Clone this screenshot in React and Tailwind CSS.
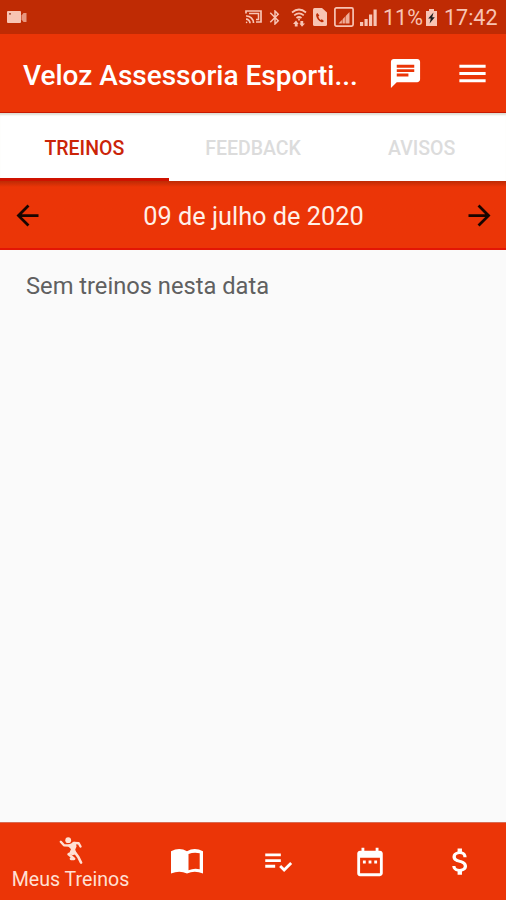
import {
  MdArrowBack,
  MdArrowForward,
  MdAttachMoney,
  MdBluetooth,
  MdChat,
  MdDateRange,
  MdMenu,
  MdPlaylistAddCheck,
} from 'react-icons/md'

const TABS = [
  { id: 'treinos', label: 'TREINOS' },
  { id: 'feedback', label: 'FEEDBACK' },
  { id: 'avisos', label: 'AVISOS' },
]

function CameraIcon() {
  return (
    <svg width="20" height="12" viewBox="0 0 20 12" fill="currentColor">
      <path d="M1 0h12q1 0 1 1v10q0 1-1 1H1q-1 0-1-1V1q0-1 1-1z" />
      <path d="M14.5 4.5l2-2.5h3v9h-3l-2-2.5z" opacity="0.7" />
      <circle cx="3" cy="2.8" r="0.9" fill="#8f2a10" />
    </svg>
  )
}

function CastIcon() {
  return (
    <svg width="17" height="14" viewBox="0 0 17 14" fill="none" stroke="currentColor" strokeWidth="1.7">
      <path d="M1 3.5V1h15v11h-5" />
      <path d="M4 3.5h9.500v6H11" strokeWidth="1.500" />
      <path d="M1 6a7 7 0 0 1 7.5 7M1 9.2a4 4 0 0 1 4 4" />
      <circle cx="1.6" cy="12.4" r="0.8" fill="currentColor" stroke="none" />
    </svg>
  )
}

function WifiIcon() {
  return (
    <svg width="16" height="19" viewBox="0 0 16 19" fill="none" stroke="currentColor" strokeWidth="1.7">
      <path d="M1 4.5q7-6 14 0M3.2 7.3q4.8-4 9.6 0M5.5 10q2.5-2 5 0" />
      <path d="M8 10.5v2" />
      <path
        d="M5 12.500L2 16h1.800v2.500h2.800V16h1zM11 18.800l3-3.300h-1.800V13H9.400v2.500h-1z"
        fill="currentColor"
        stroke="none"
      />
    </svg>
  )
}

function SimCallIcon() {
  return (
    <svg width="14" height="18" viewBox="0 0 14 18" fill="currentColor">
      <path d="M1.5 0H9l5 4.5v12q0 1.5-1.5 1.5h-11Q0 18 0 16.5v-15Q0 0 1.5 0z" />
      <path
        d="M4.3 5q-1.300.7-1.200 2.300.4 4.500 5.500 7 1.500.2 2.300-1.200l-2-1.900-1.400.8Q5.800 10.700 5.300 8.600l1.100-1z"
        fill="#bf2b04"
      />
    </svg>
  )
}

function BoxedSignalIcon() {
  return (
    <svg width="20" height="20" viewBox="0 0 20 20" fill="none" stroke="currentColor">
      <rect x="0.9" y="0.9" width="18.2" height="18.2" rx="1.5" strokeWidth="1.7" />
      <path d="M4.500 16.500L15.500 5v11.500z" fill="currentColor" stroke="none" opacity="0.85" />
      <path d="M8.300 12v5M11.300 9v8" stroke="#bf2b04" strokeWidth="0.600" />
    </svg>
  )
}

function SignalIcon() {
  return (
    <svg width="17" height="18" viewBox="0 0 17 18" fill="none" stroke="currentColor" strokeWidth="3.2">
      <path d="M1.6 18v-4M6.1 18v-7M10.6 18V6.500M15.100 18V1.500" />
    </svg>
  )
}

function BatteryIcon() {
  return (
    <svg width="11" height="17" viewBox="0 0 11 17" fill="currentColor">
      <path d="M3 0h5v2h3v15H0V2h3z" />
      <path d="M7.5 3.5L2.2 9.5h2.6L3.6 14.5l5.200-6.200H6.200z" fill="#1c1c1c" />
    </svg>
  )
}

function BookIcon() {
  return (
    <svg width="32" height="25" viewBox="0 0 32 25" fill="currentColor">
      <path
        fillRule="evenodd"
        d="M0 2.200Q8.500-2 16 2.200 23.500-2 32 2.200V24.500Q23.500 20.800 16 24.500 8.500 20.800 0 24.500zM17.500 5.100V21.300Q23 18.700 28.700 20.200V4.300Q23 2.700 17.500 5.100z"
      />
    </svg>
  )
}

function RunnerIcon() {
  return (
    <svg
      width="24"
      height="27"
      viewBox="0 0 24 27"
      fill="none"
      stroke="currentColor"
      strokeLinecap="round"
      strokeLinejoin="round"
    >
      <circle cx="9.200" cy="3.200" r="2.900" fill="currentColor" stroke="none" />
      <path d="M1.800 4.800L5 8.300l5.500.2M14.500 6l5.200.2 1.800 3.300" strokeWidth="2.400" />
      <path d="M9.500 8.500l6.500-3 .8 4-1.300 3 1.200 4-3.700 1-1.500-2.500 1.300-3z" fill="currentColor" strokeWidth="1.400" />
      <path d="M13.500 15.500l-3.800 1.800 5.300 4.500h-3M16 15.500l3.300 4.500 2.700 5.500" strokeWidth="2.700" />
    </svg>
  )
}

function StatusBar() {
  return (
    <div className="flex h-[34px] items-center bg-[#bf2b04] pl-[7px] pr-[8px] text-[#f8c4b4]">
      <CameraIcon />
      <div className="ml-auto flex items-center">
        <CastIcon />
        <MdBluetooth className="ml-[4px] h-[19px] w-[18px]" />
        <span className="ml-[7px]">
          <WifiIcon />
        </span>
        <span className="ml-[6px]">
          <SimCallIcon />
        </span>
        <span className="ml-[7px]">
          <BoxedSignalIcon />
        </span>
        <span className="ml-[6px]">
          <SignalIcon />
        </span>
        <span className="ml-[6px] w-[39px] whitespace-nowrap pt-[2px] text-[21.5px] leading-none">11%</span>
        <span className="ml-[4px]">
          <BatteryIcon />
        </span>
        <span className="ml-[7px] w-[54px] whitespace-nowrap pt-[2px] text-[21.5px] leading-none">17:42</span>
      </div>
    </div>
  )
}

function Header() {
  return (
    <header className="flex h-[79px] items-center border-b border-[#c81800] bg-[#eb3507] pl-[23px] pr-[16px] text-white">
      <h1 className="w-[340px] whitespace-nowrap pt-[6px] text-[28px] font-medium">Veloz Assessoria Esporti...</h1>
      <MdChat className="ml-[25px] size-[35px] shrink-0" />
      <MdMenu className="ml-auto size-[35px] shrink-0" />
    </header>
  )
}

function Tabs({ active }) {
  return (
    <div className="flex h-[68px] bg-white shadow-[inset_0_3px_2px_-1px_#deded4]">
      {TABS.map((tab) => (
        <button
          key={tab.id}
          className={
            tab.id === active
              ? 'flex-1 border-b-[3px] border-[#cf1200] pt-[7px] text-[19.5px] font-medium text-[#cb2408]'
              : 'flex-1 border-b-[3px] border-transparent pt-[7px] text-[19.5px] font-medium text-[#dcdcdc]'
          }
        >
          {tab.label}
        </button>
      ))}
    </div>
  )
}

function DateBar() {
  return (
    <div className="flex h-[69px] items-center justify-between border-b-2 border-[#e31505] bg-[#eb3507] bg-linear-to-b from-[#bd2b05] to-[#eb3507] to-[6px] pl-[11px] pr-[10px] pt-[2px]">
      <MdArrowBack className="size-[33px] text-[#180500]" />
      <span className="pt-[3px] text-[25.3px] text-[#fff0e8]">09 de julho de 2020</span>
      <MdArrowForward className="size-[33px] text-[#180500]" />
    </div>
  )
}

function BottomNav() {
  return (
    <nav className="flex h-[78px] items-center border-t border-[#d76c54] bg-[#eb3507] text-white">
      <div className="flex w-[141px] flex-col items-center pt-[7px] text-[#ffe0d4]">
        <RunnerIcon />
        <span className="mt-[3px] text-[19.6px] leading-[26px]">Meus Treinos</span>
      </div>
      <div className="flex w-[91px] justify-center">
        <BookIcon />
      </div>
      <div className="flex w-[92px] justify-center">
        <MdPlaylistAddCheck className="size-[34px]" />
      </div>
      <div className="flex w-[91px] justify-center">
        <MdDateRange className="size-[34px]" />
      </div>
      <div className="flex w-[91px] justify-center">
        <MdAttachMoney className="size-[35px]" />
      </div>
    </nav>
  )
}

function App() {
  return (
    <div className="flex h-[900px] w-[506px] flex-col overflow-hidden bg-[#fafafa] font-['Roboto',sans-serif]">
      <StatusBar />
      <Header />
      <Tabs active="treinos" />
      <DateBar />
      <main className="flex-1 px-[26px] pt-[18px]">
        <p className="text-[23.7px] leading-[36px] text-[#606060]">Sem treinos nesta data</p>
      </main>
      <BottomNav />
    </div>
  )
}

export default App
